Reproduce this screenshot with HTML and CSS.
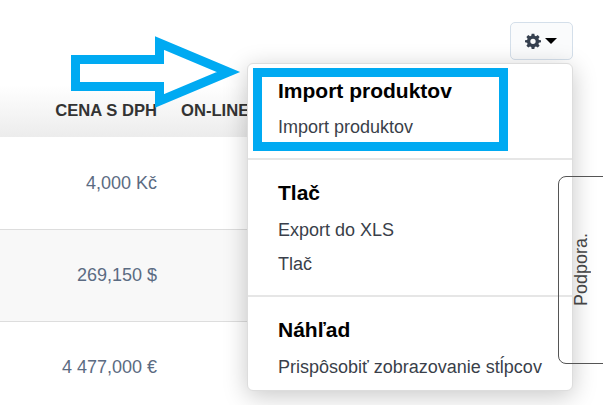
FILE: index.html
```html
<!DOCTYPE html>
<html lang="sk">
<head>
  <meta charset="UTF-8" />
  <meta name="viewport" content="width=device-width, initial-scale=1" />
  <title>Produkty</title>
  <link rel="stylesheet" href="styles.css">
</head>
<body>

<div class="page">
  <div class="toolbar">
    <button class="gear-btn" type="button">
      <svg class="gear" viewBox="0 0 24 24" width="16" height="16">
        <path fill-rule="evenodd" d="M10 1h4l.6 3.1 1.900.8 2.600-1.800 2.800 2.800-1.800 2.600.8 1.900L24 11v3l-3.100.6-.8 1.900 1.800 2.600-2.800 2.800-2.600-1.800-1.900.8L14 24h-4l-.6-3.100-1.900-.8-2.600 1.800-2.800-2.800 1.800-2.600-.8-1.900L0 14v-3l3.100-.5.8-1.900-1.800-2.700 2.800-2.800 2.600 1.800 1.900-.8zM12 8.500a4 4 0 1 0 0 8 4 4 0 0 0 0-8z"/>
      </svg>
      <span class="caret"></span>
    </button>
  </div>

  <div class="table">
    <div class="row head">
      <div class="cell price">Cena s DPH</div>
      <div class="cell">On-line</div>
    </div>
    <div class="row">
      <div class="cell price">4,000 Kč</div>
      <div class="cell"></div>
    </div>
    <div class="row odd">
      <div class="cell price">269,150 $</div>
      <div class="cell"></div>
    </div>
    <div class="row">
      <div class="cell price">4 477,000 €</div>
      <div class="cell"></div>
    </div>
  </div>
</div>

<div class="menu">
  <div class="menu-group first">
    <h6>Import produktov</h6>
    <a href="#">Import produktov</a>
  </div>
  <div class="menu-group">
    <h6>Tlač</h6>
    <a href="#">Export do XLS</a>
    <a href="#">Tlač</a>
  </div>
  <div class="menu-group">
    <h6>Náhľad</h6>
    <a href="#">Prispôsobiť zobrazovanie stĺpcov</a>
  </div>
</div>

<div class="support"><span>Podpora.</span></div>

<div class="highlight"></div>
<svg class="arrow" width="180" height="80" viewBox="0 0 180 80">
  <polygon points="9.500,24.500 93.500,24.500 93.500,8 162.500,37 93.500,66 93.500,51.500 9.500,51.500" />
</svg>

</body>
</html>
```

FILE: styles.css
```css
* { box-sizing: border-box; }
body, html {
  margin: 0; padding: 0; height: 100%; overflow: hidden;
  font-family: "Liberation Sans", Arial, sans-serif;
  background: #fff;
}
.page {
  margin-right: 30px;
}
.toolbar {
  height: 85px;
  padding-top: 22px;
  display: flex;
  justify-content: flex-end;
  align-items: flex-start;
}
.gear-btn {
  width: 63px;
  height: 38px;
  display: flex;
  align-items: center;
  justify-content: center;
  gap: 4px;
  padding: 0 1px 0 0;
  background: #fafbfc;
  border: 1px solid #d4dfea;
  border-radius: 5px;
}
.gear { fill: #36404f; }
.caret {
  width: 0;
  height: 0;
  border-left: 6px solid transparent;
  border-right: 6px solid transparent;
  border-top: 6px solid #000;
}
.row {
  display: grid;
  grid-template-columns: 169px 1fr;
  height: 92px;
  border-top: 1px solid #ddd;
  align-items: center;
  color: #5b6b82;
  font-size: 18px;
}
.row:nth-child(2) { border-top-color: transparent; }
.row.odd { background: #f8f8f8; }
.row.head {
  height: 52px;
  border-top: 0;
  background: linear-gradient(#fff, #ececec);
  color: #333;
  font-size: 16.6px;
  font-weight: bold;
  text-transform: uppercase;
  align-items: start;
  padding-top: 16px;
}
.cell { padding: 0 12px; white-space: nowrap; }
.cell.price { text-align: right; }

.menu {
  position: absolute;
  left: 247px;
  top: 63px;
  width: 326px;
  height: 328px;
  background: #fff;
  border: 1px solid #ddd;
  border-radius: 6px;
  box-shadow: 0 5px 25px rgba(0, 0, 0, 0.22);
}
.menu-group {
  padding: 21px 30px 0;
  height: 137px;
  border-bottom: 2px solid #e6e6e6;
}
.menu-group.first { height: 96px; padding-top: 15px; }
.menu-group:last-child { border-bottom: 0; height: auto; padding: 21px 0 0 30px; }
.menu h6 {
  margin: 0 0 15px;
  font-size: 21px;
  line-height: 24px;
  font-weight: bold;
  color: #000;
}
.menu .first h6 { margin-bottom: 14px; }
.menu a {
  display: block;
  font-size: 18px;
  line-height: 20px;
  margin-bottom: 14px;
  color: #3a3f4a;
  text-decoration: none;
  white-space: nowrap;
}

.support {
  position: absolute;
  left: 558px;
  top: 176px;
  width: 60px;
  height: 188px;
  border: 1px solid #555;
  border-radius: 8px;
  display: flex;
  align-items: center;
  padding-left: 12px;
  font-size: 18px;
  color: #444;
}
.support span {
  writing-mode: vertical-rl;
  transform: rotate(180deg);
}
.highlight {
  position: absolute;
  left: 253px;
  top: 68px;
  width: 255px;
  height: 83px;
  border: 9px solid #00aaf2;
}
.arrow {
  position: absolute;
  left: 66px;
  top: 35px;
  overflow: visible;
}
.arrow polygon {
  fill: #fff;
  stroke: #00aaf2;
  stroke-width: 9;
  stroke-linejoin: miter;
  stroke-miterlimit: 10;
}
```
